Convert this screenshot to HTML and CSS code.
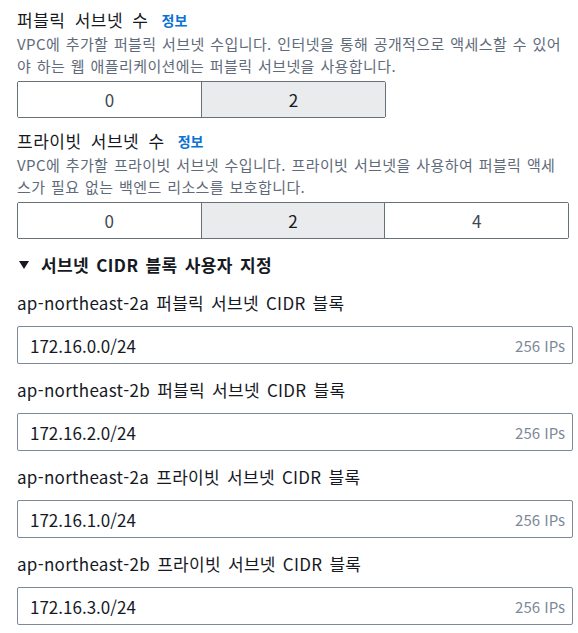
FILE: index.html
```html
<!DOCTYPE html>
<html lang="ko">
<head>
  <meta charset="UTF-8">
  <title>VPC 설정</title>
  <link rel="stylesheet" href="styles.css">
</head>
<body>

  <div class="field">
    <div class="field-title">퍼블릭 서브넷 수 <a class="info" href="#">정보</a></div>
    <p class="field-desc">VPC에 추가할 퍼블릭 서브넷 수입니다. 인터넷을 통해 공개적으로 액세스할 수 있어야 하는 웹 애플리케이션에는 퍼블릭 서브넷을 사용합니다.</p>
    <div class="segments segments-2">
      <button class="seg">0</button>
      <button class="seg active">2</button>
    </div>
  </div>

  <div class="field">
    <div class="field-title">프라이빗 서브넷 수 <a class="info" href="#">정보</a></div>
    <p class="field-desc">VPC에 추가할 프라이빗 서브넷 수입니다. 프라이빗 서브넷을 사용하여 퍼블릭 액세스가 필요 없는 백엔드 리소스를 보호합니다.</p>
    <div class="segments segments-3">
      <button class="seg">0</button>
      <button class="seg active">2</button>
      <button class="seg">4</button>
    </div>
  </div>

  <div class="expander">
    <span class="caret"></span>
    서브넷 CIDR 블록 사용자 지정
  </div>

  <div class="cidr">
    <label class="cidr-label">ap-northeast-2a 퍼블릭 서브넷 CIDR 블록</label>
    <div class="cidr-input"><span>172.16.0.0/24</span><span class="ips">256 IPs</span></div>
  </div>
  <div class="cidr">
    <label class="cidr-label">ap-northeast-2b 퍼블릭 서브넷 CIDR 블록</label>
    <div class="cidr-input"><span>172.16.2.0/24</span><span class="ips">256 IPs</span></div>
  </div>
  <div class="cidr">
    <label class="cidr-label">ap-northeast-2a 프라이빗 서브넷 CIDR 블록</label>
    <div class="cidr-input"><span>172.16.1.0/24</span><span class="ips">256 IPs</span></div>
  </div>
  <div class="cidr">
    <label class="cidr-label">ap-northeast-2b 프라이빗 서브넷 CIDR 블록</label>
    <div class="cidr-input"><span>172.16.3.0/24</span><span class="ips">256 IPs</span></div>
  </div>

</body>
</html>
```

FILE: styles.css
```css
body {
  margin: 0;
  padding: 8px 5px 0 17px;
  font-family: "Noto Sans CJK KR", sans-serif;
  color: #16191f;
  background: #fff;
}

.field + .field { margin-top: 11px; }
.field-title {
  font-size: 17px; line-height: 24px;
  letter-spacing: .5px; word-spacing: 4px;
  display: flex; align-items: center; gap: 13px;
}
.info {
  color: #0972d3; font-weight: bold;
  font-size: 14px; text-decoration: none;
  letter-spacing: 0;
}
.field-desc {
  margin: 1px 0 5px; color: #5f6b7a;
  font-size: 15px; line-height: 21.5px;
  letter-spacing: .4px; word-spacing: 1px;
  width: 552px; word-break: break-all;
}

.segments {
  display: flex; height: 37px;
  border: 1px solid #687078; border-radius: 2px;
  overflow: hidden; box-sizing: border-box;
}
.segments-2 { width: 369px; }
.segments-3 { width: 552px; }
.seg {
  flex: 1; border: none; background: #fff;
  font: inherit; font-size: 17px; color: #414750;
  border-left: 1px solid #687078; padding: 0;
}
.seg:first-child { border-left: none; }
.seg.active { background: #e9ebed; color: #16191f; }

.expander {
  display: flex; align-items: center; gap: 12px;
  margin: 14px 0 2px 2px;
  font-size: 17px; font-weight: bold; line-height: 24px;
  letter-spacing: .4px; word-spacing: 2px;
  color: #16191f;
}
.caret {
  width: 0; height: 0;
  border-left: 5px solid transparent;
  border-right: 5px solid transparent;
  border-top: 8px solid #16191f;
}

.cidr { margin-top: 13px; }
.cidr-label {
  display: block; font-size: 17px; line-height: 26px;
  letter-spacing: .3px; word-spacing: 2px;
  margin-bottom: 10px;
}
.cidr-input {
  display: flex; justify-content: space-between; align-items: center;
  width: 556px; height: 38px; box-sizing: border-box;
  border: 1px solid #7d8998; border-radius: 2px;
  padding: 0 7px 0 12px;
  font-size: 17px;
}
.ips { color: #7d8998; font-size: 15px; }
```
